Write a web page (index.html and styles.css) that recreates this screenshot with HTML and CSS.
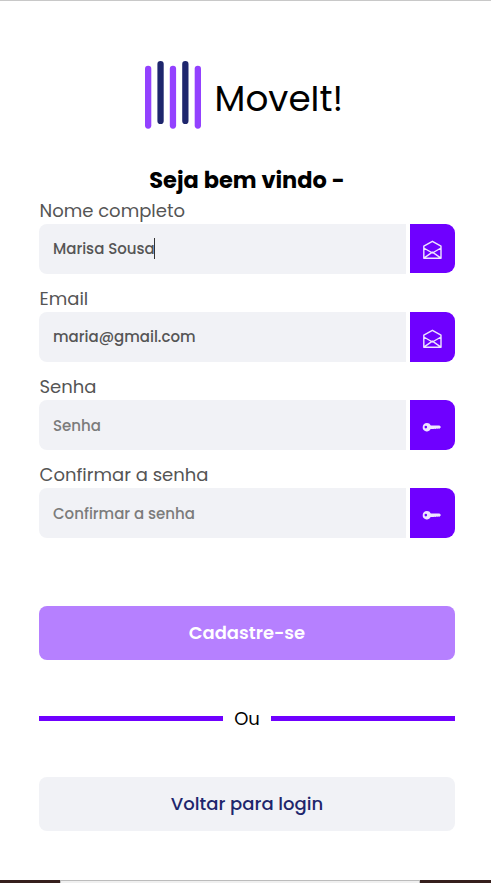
FILE: index.html
```html
<!DOCTYPE html>
<html lang="pt-BR">
<head>
<meta charset="utf-8">
<title>MoveIt!</title>
<link rel="stylesheet" href="styles.css">
</head>
<body>
<svg class="sprite" width="0" height="0">
  <symbol id="mail" viewBox="0 0 20 20"><path d="M1.8 6.2 10.4 1.3 19 6.2V18.2H1.8zM1.8 8 10.4 13 19 8M2.2 17.8l8.2-5.6 8.2 5.6" fill="none" stroke="currentColor" stroke-width="1.4" stroke-linejoin="round"/></symbol>
  <symbol id="key" viewBox="0 0 20 20"><path fill-rule="evenodd" fill="currentColor" d="M5 6a4.2 4.2 0 0 1 3.8 2.4h8.7L19 10l-1.5 1.7-1-.2-1 .3-1-.2-1 .3-1-.2-1 .3H8.7A4.2 4.2 0 1 1 5 6zM3.8 8.8a1.3 1.3 0 1 0 0 2.6 1.3 1.3 0 0 0 0-2.6z"/></symbol>
</svg>
<main class="page">
  <header class="logo">
    <svg class="bars" width="57" height="68" viewBox="0 0 57 68">
      <g fill="#9341ff"><rect x="0" y="4.7" width="6.3" height="63" rx="3.1"/><rect x="24.8" y="4.7" width="6.3" height="63" rx="3.1"/><rect x="49.7" y="4.7" width="6.3" height="63" rx="3.1"/></g>
      <g fill="#1e266d"><rect x="12.4" y="0" width="6.3" height="63" rx="3.1"/><rect x="37.2" y="0" width="6.3" height="63" rx="3.1"/></g>
    </svg>
    <span class="brand">MoveIt!</span>
  </header>
  <h1 class="title">Seja bem vindo -</h1>
  <form class="form">
    <div class="field">
      <span class="label">Nome completo</span>
      <div class="row"><div class="input focused"><span>Marisa Sousa</span></div><div class="icon short"><svg width="20" height="20"><use href="#mail"/></svg></div></div>
    </div>
    <div class="field">
      <span class="label">Email</span>
      <div class="row"><div class="input filled"><span>maria@gmail.com</span></div><div class="icon"><svg width="20" height="20"><use href="#mail"/></svg></div></div>
    </div>
    <div class="field">
      <span class="label">Senha</span>
      <div class="row"><div class="input empty"><span>Senha</span></div><div class="icon"><svg width="20" height="20"><use href="#key"/></svg></div></div>
    </div>
    <div class="field">
      <span class="label">Confirmar a senha</span>
      <div class="row"><div class="input empty"><span>Confirmar a senha</span></div><div class="icon"><svg width="20" height="20"><use href="#key"/></svg></div></div>
    </div>
    <button class="button primary" type="button">Cadastre-se</button>
    <div class="divider"><span>Ou</span></div>
    <button class="button secondary" type="button">Voltar para login</button>
  </form>
  <footer class="bottom"><div class="bar"></div></footer>
</main>
</body>
</html>
```
FILE: styles.css
```css
* { box-sizing: border-box; }
body { margin: 0; background: #fff; font-family: Poppins, Inter, sans-serif; }
.sprite { position: absolute; }
.page { height: 883px; border-top: 1px solid #c8c8c8; display: flex; flex-direction: column; overflow: hidden; }
.logo { display: flex; margin: 60px 0 0 145px; height: 68px; flex: none; }
.bars { flex: none; }
.brand { margin-left: 12.6px; font-size: 35.8px; line-height: 75px; white-space: nowrap; }
.title { margin: 33px 0 0; padding-left: 3px; height: 36px; line-height: 36px; font-size: 22.5px; font-weight: 700; text-align: center; }
.form { margin: 0 36px 0 39px; }
.field { height: 88px; }
.label { display: block; height: 26px; padding-left: 0.5px; line-height: 26px; font-size: 18px; color: #555; white-space: nowrap; }
.row { display: flex; gap: 4px; height: 50px; }
.input { flex: 1; display: flex; align-items: center; padding-left: 14px; background: #f1f2f6; border-radius: 8px 0 0 8px; color: #555; font-size: 15px; font-weight: 500; white-space: nowrap; }
.focused, .filled { padding-bottom: 2px; }
.empty { color: #7b7b7b; }
.focused::after { content: ""; width: 1px; height: 21px; margin-left: -1px; background: #333; }
.icon { width: 45px; display: flex; align-items: center; justify-content: center; padding: 3px 1px 0 0; background: #6f00ff; color: #eee5ff; border-radius: 0 9px 9px 0; }
.short { height: 49px; }
.button { display: block; width: 100%; height: 54px; border: 0; padding: 0; border-radius: 8px; font: 500 18px/54px Poppins, Inter, sans-serif; }
.primary { margin-top: 56px; background: #b680ff; color: #fff; font-weight: 600; font-size: 17.9px; }
.secondary { margin-top: 45px; background: #f1f2f6; color: #1e266d; }
.divider { display: flex; align-items: center; justify-content: space-between; height: 27px; margin-top: 45px; font-size: 18px; }
.divider::before, .divider::after { content: ""; width: 184px; height: 5px; background: #6f00ff; }
.bottom { height: 3px; margin-top: auto; padding: 0 71px 0 60px; background: #351f1c; }
.bar { height: 3px; background: #f0f0f0; border: 1px solid #bcbcbc; border-bottom: 0; }
```
